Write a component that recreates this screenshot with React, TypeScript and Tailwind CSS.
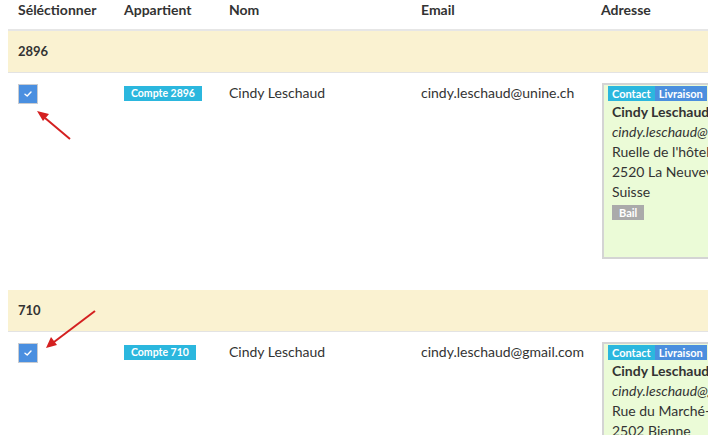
import React from "react";

type Entry = {
  group: string;
  compte: string;
  name: string;
  email: string;
  lines: string[];
  bail?: boolean;
};

const entries: Entry[] = [
  {
    group: "2896",
    compte: "Compte 2896",
    name: "Cindy Leschaud",
    email: "cindy.leschaud@unine.ch",
    lines: ["Ruelle de l'hôtel de ville 3", "2520 La Neuveville", "Suisse"],
    bail: true,
  },
  {
    group: "710",
    compte: "Compte 710",
    name: "Cindy Leschaud",
    email: "cindy.leschaud@gmail.com",
    lines: ["Rue du Marché-Neuf 12", "2502 Bienne", "Suisse"],
  },
];

function Check() {
  return (
    <div className="grid h-5 w-5 place-items-center border border-[#c9ccd1] bg-[#4a8fe0]">
      <svg width="10" height="8" viewBox="0 0 10 8" fill="none">
        <path d="M2 4.2 4.2 6 8 2" stroke="white" strokeWidth="1.4" strokeLinecap="round" strokeLinejoin="round" />
      </svg>
    </div>
  );
}

function AddressCard({ e }: { e: Entry }) {
  return (
    <div className="h-[176px] w-[200px] border-2 border-[#d4d4d4] bg-[#ebfbd7] px-[4px] pt-[1px]">
      <div className="flex text-[11px] font-bold leading-[15px] text-white">
        <span className="bg-[#2bb7de] px-[4px]">Contact</span>
        <span className="bg-[#4b8fde] px-[4px]">Livraison</span>
      </div>
      <div className="whitespace-nowrap pl-[4px] pt-[1px] text-[14px] leading-[20px] text-[#333]">
        <div className="font-bold">{e.name}</div>
        <div className="italic">{e.email}</div>
        {e.lines.map((l) => (
          <div key={l}>{l}</div>
        ))}
        {e.bail && (
          <span className="mt-[2px] inline-block bg-[#aaaaaa] px-[7px] text-[11px] font-bold leading-[15px] text-white">
            Bail
          </span>
        )}
      </div>
    </div>
  );
}

export default function App() {
  return (
    <div className="relative h-[435px] w-[708px] overflow-hidden bg-white font-['Lato','Liberation_Sans',sans-serif] text-[#333]">
      <div className="ml-2 w-[900px]">
        {/* en-tête */}
        <div className="flex h-[31px] border-b-2 border-[#e6e6e6] pt-[1px] text-[14px] font-bold leading-[18px]">
          <div className="w-[106px] pl-[10px]">Séléctionner</div>
          <div className="w-[105px] pl-[10px]">Appartient</div>
          <div className="w-[192px] pl-[10px]">Nom</div>
          <div className="w-[180px] pl-[10px]">Email</div>
          <div className="pl-[10px]">Adresse</div>
        </div>

        {entries.map((e) => (
          <div key={e.group}>
            <div className="flex h-[42px] items-center border-b border-[#e3e3e3] bg-[#faf2d1] pl-[10px] text-[13px] font-bold">
              {e.group}
            </div>
            <div className="flex h-[217px] pt-[10px] text-[14px] leading-[20px]">
              <div className="w-[106px] pl-[10px] pt-[1px]">
                <Check />
              </div>
              <div className="w-[105px] pl-[10px] pt-[3px]">
                <span className="block w-fit bg-[#2bb7de] px-[7px] text-[10.5px] font-bold leading-[15px] text-white">
                  {e.compte}
                </span>
              </div>
              <div className="w-[192px] pl-[10px]">{e.name}</div>
              <div className="w-[180px] pl-[10px]">{e.email}</div>
              <div className="pl-[11px]">
                <AddressCard e={e} />
              </div>
            </div>
          </div>
        ))}
      </div>

      {/* flèches d'annotation */}
      <svg className="pointer-events-none absolute left-0 top-0" width="708" height="435">
        <g stroke="#d42020" strokeWidth="2" fill="#d42020">
          <line x1="70" y1="139" x2="45" y2="118" />
          <polygon points="37,111 49,114 43,121" stroke="none" />
          <line x1="95" y1="311" x2="54" y2="342" />
          <polygon points="46,348 51,337 57,345" stroke="none" />
        </g>
      </svg>
    </div>
  );
}
